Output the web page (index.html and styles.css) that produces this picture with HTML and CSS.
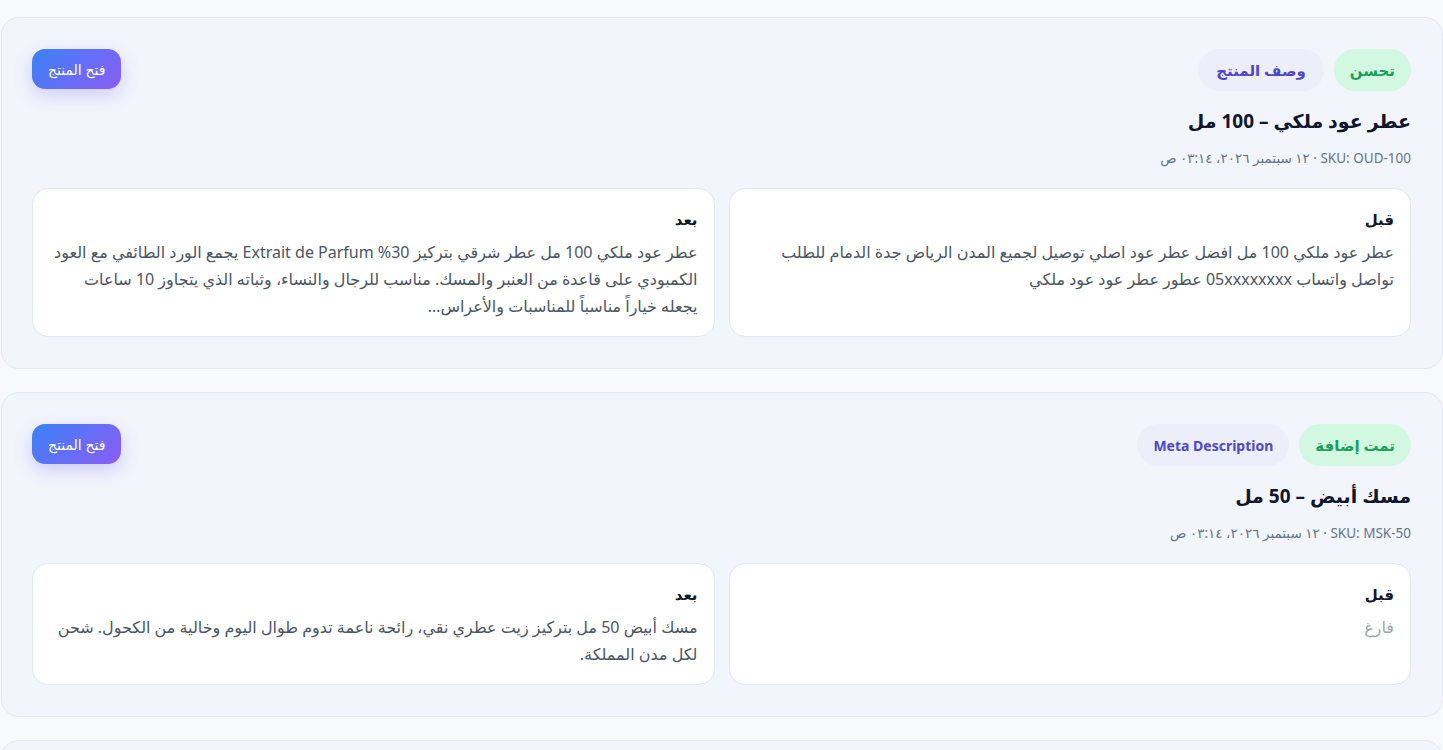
FILE: index.html
```html
<!DOCTYPE html>
<html lang="ar" dir="rtl">
<head>
    <meta charset="UTF-8">
    <meta name="viewport" content="width=device-width, initial-scale=1.0">
    <title>سجل التحسينات</title>
    <link rel="stylesheet" href="styles.css">
</head>
<body>
    <div class="list">
        <!-- Product 1 -->
        <div class="card">
            <div class="card-head">
                <div class="info">
                    <div class="chips">
                        <span class="chip chip-green">تحسن</span>
                        <span class="chip chip-field">وصف المنتج</span>
                    </div>
                    <h2 class="title">عطر عود ملكي – 100 مل</h2>
                    <div class="meta">SKU: OUD-100 · ١٢ سبتمبر ٢٠٢٦، ٠٣:١٤ ص</div>
                </div>
                <button class="open-btn" type="button">فتح المنتج</button>
            </div>
            <div class="compare">
                <div class="box">
                    <div class="box-label">قبل</div>
                    <p class="box-text">عطر عود ملكي 100 مل افضل عطر عود اصلي توصيل لجميع المدن الرياض جدة الدمام للطلب تواصل واتساب 05xxxxxxxx عطور عطر عود عود ملكي</p>
                </div>
                <div class="box">
                    <div class="box-label">بعد</div>
                    <p class="box-text">عطر عود ملكي 100 مل عطر شرقي بتركيز 30% Extrait de Parfum يجمع الورد الطائفي مع العود الكمبودي على قاعدة من العنبر والمسك. مناسب للرجال والنساء، وثباته الذي يتجاوز 10 ساعات يجعله خياراً مناسباً للمناسبات والأعراس…</p>
                </div>
            </div>
        </div>

        <!-- Product 2 -->
        <div class="card">
            <div class="card-head">
                <div class="info">
                    <div class="chips">
                        <span class="chip chip-green">تمت إضافة</span>
                        <span class="chip chip-field latin">Meta Description</span>
                    </div>
                    <h2 class="title">مسك أبيض – 50 مل</h2>
                    <div class="meta">SKU: MSK-50 · ١٢ سبتمبر ٢٠٢٦، ٠٣:١٤ ص</div>
                </div>
                <button class="open-btn" type="button">فتح المنتج</button>
            </div>
            <div class="compare">
                <div class="box">
                    <div class="box-label">قبل</div>
                    <p class="box-text empty">فارغ</p>
                </div>
                <div class="box">
                    <div class="box-label">بعد</div>
                    <p class="box-text">مسك أبيض 50 مل بتركيز زيت عطري نقي، رائحة ناعمة تدوم طوال اليوم وخالية من الكحول. شحن لكل مدن المملكة.</p>
                </div>
            </div>
        </div>

        <!-- Product 3 -->
        <div class="card">
            <div class="card-head">
                <div class="info">
                    <div class="chips">
                        <span class="chip chip-green">تحسن</span>
                        <span class="chip chip-field">عنوان المنتج</span>
                    </div>
                    <h2 class="title">دهن عود كمبودي – 3 مل</h2>
                    <div class="meta">SKU: DHN-03 · ١٢ سبتمبر ٢٠٢٦، ٠٣:١٤ ص</div>
                </div>
                <button class="open-btn" type="button">فتح المنتج</button>
            </div>
        </div>
    </div>
</body>
</html>
```

FILE: styles.css
```css
body {
    font-family: "Noto Sans", "DejaVu Sans", sans-serif;
    margin: 0;
    padding: 0;
    background-color: #f8f9fc;
    color: #0f172a;
}

.list {
    display: flex;
    flex-direction: column;
    gap: 23px;
    padding: 17px 0 0 1px;
}

.card {
    background-color: #f3f5fc;
    border: 1px solid #e2e7f0;
    border-radius: 18px;
    padding: 31px 31px 31px 30px;
}

.card-head {
    display: flex;
    justify-content: space-between;
    align-items: flex-start;
}

.chips {
    display: flex;
    gap: 10px;
}

.chip {
    display: inline-flex;
    align-items: center;
    height: 42px;
    padding: 0 16px;
    border-radius: 999px;
    font-size: 15px;
    font-weight: bold;
}

.chip-green {
    background-color: #d3f8e2;
    color: #16a05a;
}

.chip-field {
    background-color: #eceffa;
    color: #4f46c8;
    padding: 0 18px;
}

.chip-field.latin {
    font-size: 14px;
    padding: 0 16px;
}

.title {
    margin: 15px 0 0;
    font-size: 19px;
    line-height: 30px;
    font-weight: bold;
    color: #0f172a;
}

.meta {
    margin-top: 12px;
    font-size: 13.5px;
    line-height: 20px;
    color: #64748b;
}

.open-btn {
    height: 40px;
    padding: 0 16px;
    border: none;
    border-radius: 13px;
    background: linear-gradient(135deg, #3b82f6, #8b5cf6);
    color: #fff;
    font-family: inherit;
    font-size: 14px;
    cursor: pointer;
    box-shadow: 0 6px 18px rgba(99, 102, 241, 0.28);
}

.compare {
    display: grid;
    grid-template-columns: 1fr 1fr;
    gap: 14px;
    margin-top: 20px;
}

.box {
    background-color: #fff;
    border: 1px solid #e2e7f0;
    border-radius: 16px;
    padding: 18px 16px 16px;
}

.box-label {
    font-size: 15px;
    line-height: 24px;
    font-weight: bold;
    color: #111827;
}

.box-text {
    margin: 8px 0 0;
    font-size: 16px;
    line-height: 27px;
    color: #4b5563;
}

.box-text.empty {
    color: #9ca3af;
}
```
